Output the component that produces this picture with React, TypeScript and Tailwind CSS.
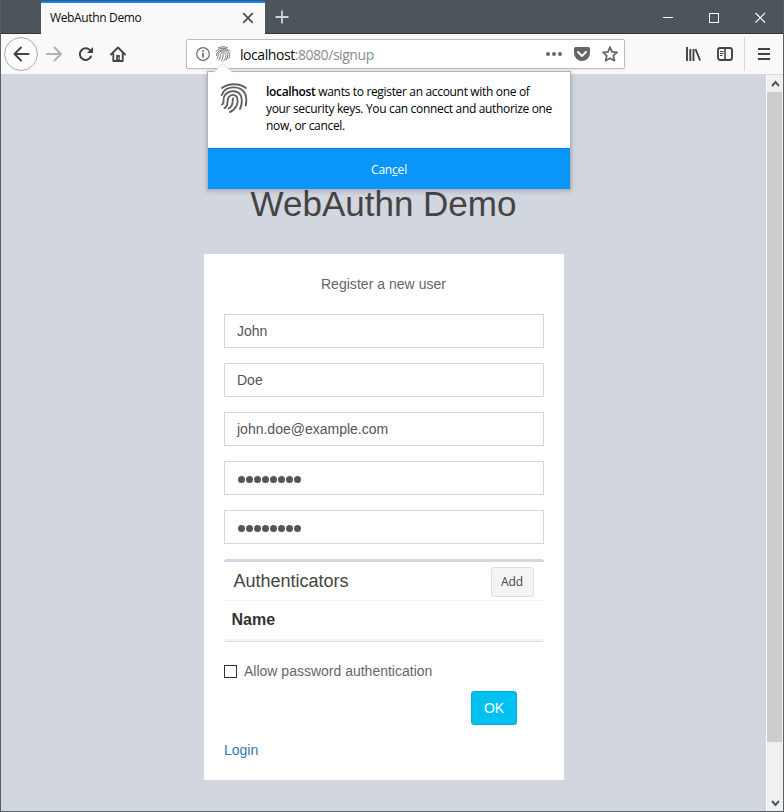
import React from "react";

const UI = "font-['Open_Sans','Noto_Sans',sans-serif]";

function TitleBar() {
  return (
    <div className="flex h-[34px] shrink-0 border-b border-[#2f363d] bg-[#4d555b]">
      <div className="mt-px -mb-px ml-10 flex h-[34px] w-[224px] items-start border-t-2 border-[#0a84ff] bg-[#f9f9fa] pt-[7px] pl-[9px]">
        <span className={`${UI} w-[192px] text-[12px] leading-4 tracking-[-0.35px] whitespace-nowrap text-[#0c0c0d]`}>WebAuthn Demo</span>
        <svg width="12" height="12" viewBox="0 0 12 12" className="mt-0.5" fill="none" stroke="#4a4a4f" strokeWidth="1.7" strokeLinecap="round"><path d="M1.700 1.700l8.600 8.600M10.300 1.700l-8.600 8.600" /></svg>
      </div>
      <svg width="14" height="14" viewBox="0 0 14 14" className="mt-[10px] ml-[10px]" stroke="#d0d3d6" strokeWidth="1.800"><path d="M7 .5v13M.5 7h13" /></svg>
      <div className="ml-auto flex pt-3 pr-[17px]">
        <svg width="11" height="12" viewBox="0 0 11 12" stroke="#fff"><path d="M0 5.500h10" /></svg>
        <svg width="11" height="12" viewBox="0 0 11 12" className="ml-[35px]" fill="none" stroke="#fff"><rect x=".5" y="1.500" width="9" height="9" /></svg>
        <svg width="11" height="12" viewBox="0 0 11 12" className="ml-[35px]" stroke="#fff" strokeWidth="1.100"><path d="M.5 1l9.500 9.500M10 1L.5 10.500" /></svg>
      </div>
    </div>
  );
}

function SmallPrint() {
  return (
    <svg width="16" height="16" viewBox="0 0 16 16" fill="none" stroke="#707072" strokeWidth=".95" strokeLinecap="round">
      <path d="M3.500 1.800C6 .4 10 .4 12.500 1.800M1.200 5.200C4.200 1.200 11.800 1.200 14.800 5.200" />
      <path d="M1.400 9.500C1 2.300 14.500 1.800 14.500 8.500c0 1.500-.1 2.500-.6 3.800" />
      <path d="M2.200 12.500C4 10.500 2 5 8 4.800c3.600 0 4.800 2.200 4.700 4.600-.1 2-.6 3.200-1.300 4.500" />
      <path d="M4 14C6.200 11.500 4.200 6.900 8 6.700c2 0 3 1.200 2.900 3-.1 2.200-1 4-2.300 5.500" />
      <path d="M6.200 15C8.400 12.800 7.600 10.500 8.300 8.700" />
    </svg>
  );
}

function Toolbar() {
  return (
    <div className="flex h-[41px] shrink-0 items-start border-b border-[#d9d9dc] bg-[#f9f9fa]">
      <svg width="34" height="34" viewBox="0 0 34 34" className="mt-[3px] ml-[3px]" fill="none">
        <circle cx="17" cy="17" r="16.400" fill="#fcfcfc" stroke="#aaaaac" />
        <path d="M24.500 17h-14M17 10.500L10.500 17l6.500 6.500" stroke="#434347" strokeWidth="2" strokeLinecap="round" strokeLinejoin="round" />
      </svg>
      <svg width="18" height="16" viewBox="0 0 18 16" className="mt-3 ml-[7px]" fill="none" stroke="#b2b2b4" strokeWidth="2" strokeLinecap="round" strokeLinejoin="round"><path d="M2 8h14M9.500 1.500L16 8l-6.500 6.500" /></svg>
      <svg width="16" height="16" viewBox="0 0 16 16" className="mt-3 ml-[15px]" fill="none" stroke="#434347" strokeWidth="2"><path d="M13 10.500A5.800 5.800 0 1 1 12.500 4.800" strokeLinecap="round" /><path d="M15 1v6H9z" fill="#434347" stroke="none" /></svg>
      <svg width="16" height="16" viewBox="0 0 16 16" className="mt-3 ml-4" fill="none" stroke="#434347" strokeWidth="1.800" strokeLinecap="round" strokeLinejoin="round"><path d="M1 8.500L8 1.500l7 7M3.300 8v7h9.400V8" /><path d="M8 9v6" strokeWidth="3.600" strokeLinecap="butt" /><path d="M8.500 11.500v1.500" stroke="#f9f9fa" strokeWidth="1" strokeLinecap="butt" /></svg>

      <div className="mt-[5px] ml-[60px] flex h-[30px] w-[439px] items-center rounded-[2px] border border-[#bdbdbf] bg-white shadow-[0_1px_3px_rgba(0,0,0,0.07)]">
        <svg width="14" height="14" viewBox="0 0 14 14" className="ml-[9px]" fill="none" stroke="#6a6a6c" strokeWidth="1.200"><circle cx="7" cy="7" r="6.300" /><path d="M7 6v4.500M7 3.200v1.700" strokeWidth="1.700" /></svg>
        <div className="ml-[5px]"><SmallPrint /></div>
        <div className={`${UI} mt-0.5 ml-[9px] w-[300px] text-[14px] leading-5 tracking-[-0.44px] whitespace-nowrap text-[#8a8a8d]`}><span className="text-[#0c0c0d]">localhost</span>:8080/signup</div>
        <svg width="16" height="16" viewBox="0 0 16 16" className="ml-[6px]" fill="#666668"><circle cx="2" cy="8" r="2" /><circle cx="8" cy="8" r="2" /><circle cx="14" cy="8" r="2" /></svg>
        <svg width="16" height="16" viewBox="0 0 16 16" className="ml-3"><path d="M1.500 1h13A1.500 1.500 0 0 1 16 2.500V7a8 8 0 0 1-16 0V2.500A1.500 1.500 0 0 1 1.500 1z" fill="#666668" /><path d="M4 6l4 4 4-4" fill="none" stroke="#fff" strokeWidth="1.900" strokeLinecap="round" strokeLinejoin="round" /></svg>
        <svg width="16" height="16" viewBox="0 0 16 16" className="ml-3" fill="none" stroke="#666668" strokeWidth="1.800" strokeLinejoin="round"><path d="M8 1.200l2 4.600 5 .5-3.700 3.400 1.100 5L8 12.200l-4.400 2.500 1.100-5L1 6.300l5-.5z" /></svg>
      </div>

      <svg width="16" height="16" viewBox="0 0 16 16" className="mt-3 ml-[60px]" fill="none" stroke="#434347"><path d="M2 1v14M5.300 3v12M8.500 3v12" strokeWidth="1.900" /><path d="M10.500 3l4.600 11.500" strokeWidth="1.900" /></svg>
      <svg width="16" height="16" viewBox="0 0 16 16" className="mt-3 ml-4" fill="none" stroke="#434347"><rect x="1" y="2" width="14" height="12" rx="2.200" strokeWidth="1.900" /><path d="M8 2v12" strokeWidth="1.600" /><path d="M3 5.500h3.500M3 7.500h3.500M3 9.500h2.500" strokeWidth="1" /></svg>
      <div className="mt-[3px] ml-[11px] h-[34px] w-px bg-[#d7d7d9]" />
      <svg width="12" height="14" viewBox="0 0 12 14" className="mt-[13px] ml-[13px]" stroke="#434347" strokeWidth="2"><path d="M0 2h12M0 7h12M0 12h12" /></svg>
    </div>
  );
}

function Doorhanger() {
  return (
    <div className="absolute top-[71px] left-[206px] flex h-[119px] w-[364px] flex-col border border-[#b0b3b9] bg-white shadow-[0_1px_5px_rgba(0,0,0,0.22)]">
      <svg width="20" height="10" viewBox="0 0 20 10" className="absolute -top-[9px] left-[5px]"><path d="M0 10L10 .5 20 10z" fill="#fff" /><path d="M0 9.500L10 .7l10 8.800" fill="none" stroke="#cfcfd2" strokeWidth=".8" /></svg>
      <div className="flex h-[76px] shrink-0 pt-[10px]">
        <svg width="28" height="32" viewBox="0 0 28 32" className="ml-3" fill="none" stroke="#606062" strokeWidth="1.900" strokeLinecap="round">
          <path d="M2 6C8.500 .9 19.500 .9 26 6" />
          <path d="M1.800 13C5 3.500 20.500 2.800 25 11.500C27 15.500 26.500 19.500 25.700 23.500" />
          <path d="M2 22.500C5.500 21 1.500 17.500 5 13C9.500 7.500 18.800 8 21.200 14.500C22.500 19 21.700 23 20 27" />
          <path d="M4.500 26C9.500 24 6 19 8.700 15C11 11.800 15.900 12.300 17.300 16C18.800 21 16 27.500 10 30" />
          <path d="M8.500 26.500C14 24 12 20 13 16.500" />
        </svg>
        <p className={`${UI} mt-px ml-[18px] text-[12px] leading-[17px] tracking-[-0.33px] whitespace-nowrap text-black`}>
          <span className="font-semibold">localhost</span> wants to register an account with one of<br />your security keys. You can connect and authorize one<br />now, or cancel.
        </p>
      </div>
      <button className={`${UI} flex-1 border-t border-[#0a80dc] bg-[#0996f8] pt-px text-[12px] leading-4 tracking-[-0.2px] text-white`}>Can<span className="underline">c</span>el</button>
    </div>
  );
}

const fields = ["John", "Doe", "john.doe@example.com", "password", "password"];

function SignupCard() {
  return (
    <div className="mt-[28px] flex h-[526px] w-[360px] flex-col bg-white px-5 pt-5 text-[14px] leading-5 text-[#666]">
      <p className="text-center tracking-[0.03px]">Register a new user</p>
      <div className="mt-5 flex flex-col gap-[15px]">
        {fields.map((value, i) => (
          <div key={i} className="flex h-[34px] items-center border border-[#d2d6de] px-3 text-[#555]">
            {value === "password" ? (
              <span className="flex gap-px pt-0.5 pl-px">
                {Array.from({ length: 8 }, (_, n) => <span key={n} className="size-[7px] rounded-full bg-[#555]" />)}
              </span>
            ) : <span className="pl-[0.5px]">{value}</span>}
          </div>
        ))}
      </div>
      <section className="mt-[15px] h-[83px] rounded-[3px] border-t-[3px] border-b border-t-[#d2d6de] border-b-[#dedede] text-[#444]">
        <div className="flex h-[39px] items-start border-b border-[#f4f4f4] pr-[10px] pl-[10px]">
          <h2 className="mt-[9px] text-[18px] leading-5">Authenticators</h2>
          <button className={`${UI} mt-[5px] ml-auto h-[30px] w-[43px] rounded-[3px] border border-[#ddd] bg-[#f4f4f4] text-[12px] tracking-[-0.1px] text-[#444]`}>Add</button>
        </div>
        <div className="h-[40px] border-b-2 border-[#f4f4f4] pt-[9px] pl-2 text-[16px] font-bold text-[#333]">Name</div>
      </section>
      <label className="mt-[19px] flex items-center"><span className="mr-[7.500px] size-[13px] border border-[#333] bg-white" />Allow password authentication</label>
      <button className="mt-[10px] mr-[27px] h-[34px] w-[46px] shrink-0 self-end rounded-[3px] border border-[#00acd6] bg-[#00c0ef] pl-px text-white">OK</button>
      <a className="mt-[15px] pl-[0.5px] text-[#337ab7]">Login</a>
    </div>
  );
}

function Scrollbar() {
  return (
    <div className="flex w-[17px] shrink-0 flex-col border-l border-white bg-[#f0f0f0]">
      <div className="flex h-[17px] shrink-0 items-center justify-center"><svg width="9" height="8" viewBox="0 0 9 8" fill="none" stroke="#55565a" strokeWidth="2"><path d="M1 6l3.500-4L8 6" /></svg></div>
      <div className="h-[650px] w-[15px] bg-[#cdcdcd]" />
      <div className="mt-auto flex h-[17px] items-center justify-center"><svg width="9" height="8" viewBox="0 0 9 8" fill="none" stroke="#55565a" strokeWidth="2"><path d="M1 2l3.500 4L8 2" /></svg></div>
    </div>
  );
}

export default function App() {
  return (
    <div className="relative flex h-[812px] w-[784px] flex-col overflow-hidden border-x border-b border-[#596168] bg-[#f9f9fa] font-['Liberation_Sans',Arial,sans-serif]">
      <TitleBar />
      <Toolbar />
      <div className="flex min-h-0 flex-1">
        <main className="flex flex-1 flex-col items-center bg-[#d2d6de]">
          <h1 className="mt-[106px] text-[35px] leading-[45px] text-[#444]">WebAuthn Demo</h1>
          <SignupCard />
        </main>
        <Scrollbar />
      </div>
      <Doorhanger />
    </div>
  );
}
